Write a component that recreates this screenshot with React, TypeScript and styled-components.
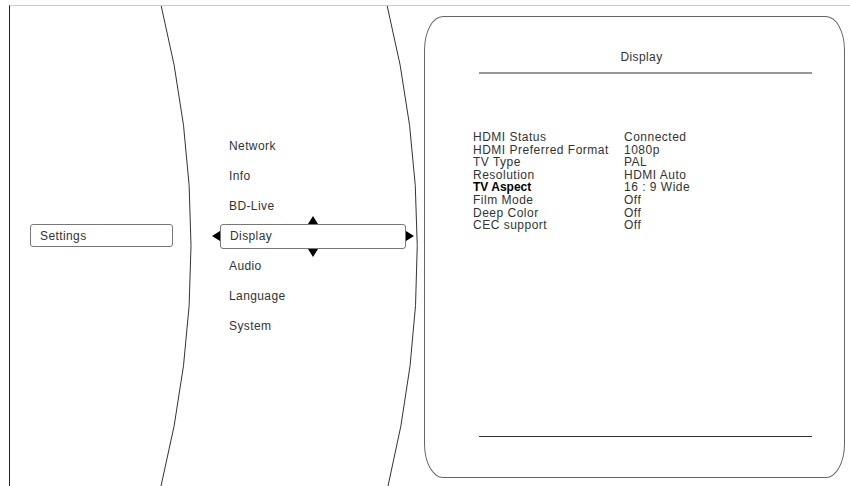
import React from 'react';
import styled, { createGlobalStyle } from 'styled-components';

const GlobalStyle = createGlobalStyle`
  html, body {
    margin: 0;
    padding: 0;
    background: #fff;
  }
  body {
    font-family: "Liberation Sans", Arial, sans-serif;
    color: #333;
  }
`;

const Stage = styled.div`
  position: relative;
  width: 850px;
  height: 486px;
  overflow: hidden;
  background: #fff;
`;

// the two curved dividers are a drawing behind the menu
const Backdrop = styled.svg`
  position: absolute;
  inset: 0;
  pointer-events: none;
`;

const Frame = styled.div`
  position: relative;
  display: flex;
  margin: 5px 0 0 9px;
  width: 841px;
  height: 481px;
  box-sizing: border-box;
  border-top: 1px solid #ccc;
  border-left: 1px solid #222;
`;

const LeftCol = styled.div`
  width: 210px;
  padding: 218px 0 0 20px;
  box-sizing: border-box;
`;

const MenuCol = styled.div`
  width: 204px;
  padding-top: 125px;
  box-sizing: border-box;
  display: flex;
  flex-direction: column;
`;

const Box = styled.div<{ $w: number; $h: number }>`
  position: relative;
  width: ${(p) => p.$w}px;
  height: ${(p) => p.$h}px;
  box-sizing: border-box;
  border: 1px solid #777;
  border-radius: 3px;
  padding-left: 9px;
  display: flex;
  align-items: center;
  font-size: 12px;
  letter-spacing: 0.4px;
  color: #333;
`;

const MenuItem = styled.div`
  height: 30px;
  display: flex;
  align-items: center;
  padding-left: 9px;
  font-size: 12px;
  letter-spacing: 0.4px;
  color: #333;
`;

const MenuSlot = styled.div`
  height: 30px;
  display: flex;
  align-items: center;
`;

const Arrow = styled.span<{ $dir: 'left' | 'right' | 'up' | 'down' }>`
  position: absolute;
  width: 0;
  height: 0;
  ${(p) =>
    p.$dir === 'left'
      ? `left: -9px; top: 50%; margin-top: -5px;
         border-top: 5px solid transparent; border-bottom: 5px solid transparent;
         border-right: 8px solid #000;`
      : p.$dir === 'right'
      ? `right: -9px; top: 50%; margin-top: -5px;
         border-top: 5px solid transparent; border-bottom: 5px solid transparent;
         border-left: 8px solid #000;`
      : p.$dir === 'up'
      ? `top: -9px; left: 50%; margin-left: -5px;
         border-left: 5px solid transparent; border-right: 5px solid transparent;
         border-bottom: 8px solid #000;`
      : `bottom: -9px; left: 50%; margin-left: -5px;
         border-left: 5px solid transparent; border-right: 5px solid transparent;
         border-top: 8px solid #000;`}
`;

const Panel = styled.div`
  margin-top: 10px;
  width: 421px;
  height: 462px;
  box-sizing: border-box;
  border: 1px solid #666;
  border-radius: 19px / 34px;
  background: #fff;
  display: flex;
  flex-direction: column;
  padding: 32px 0 40px 48px;
`;

const Title = styled.div`
  width: 325px;
  margin-left: 6px;
  text-align: center;
  font-size: 12px;
  letter-spacing: 0.4px;
  line-height: 16px;
  color: #333;
`;

const Rule = styled.div<{ $thick?: boolean }>`
  width: 333px;
  margin-left: 6px;
  height: ${(p) => (p.$thick ? 2 : 1)}px;
  background: ${(p) => (p.$thick ? '#999' : '#333')};
`;

const TopRule = styled(Rule)`
  margin-top: 7px;
`;

const Table = styled.div`
  margin-top: 57px;
  display: grid;
  grid-template-columns: 151px auto;
  font-size: 12px;
  letter-spacing: 0.5px;
  line-height: 12.6px;
  color: #333;
  flex: 1;
  align-content: start;
`;

const Cell = styled.div<{ $bold?: boolean }>`
  white-space: nowrap;
  font-weight: ${(p) => (p.$bold ? 700 : 400)};
  letter-spacing: ${(p) => (p.$bold ? '0' : '0.5px')};
  color: ${(p) => (p.$bold ? '#000' : '#333')};
`;

const menu = ['Network', 'Info', 'BD-Live', 'Display', 'Audio', 'Language', 'System'];

const rows: [string, string, boolean?][] = [
  ['HDMI Status', 'Connected'],
  ['HDMI Preferred Format', '1080p'],
  ['TV Type', 'PAL'],
  ['Resolution', 'HDMI Auto'],
  ['TV Aspect', '16 : 9 Wide', true],
  ['Film Mode', 'Off'],
  ['Deep Color', 'Off'],
  ['CEC support', 'Off'],
];

export default function App() {
  return (
    <Stage>
      <GlobalStyle />
      <Backdrop width="850" height="486" viewBox="0 0 850 486">
        <path d="M161 5 Q221 245.5 161 486" fill="none" stroke="#333" strokeWidth="1" />
        <path d="M387 5 Q447 245.5 388 486" fill="none" stroke="#333" strokeWidth="1" />
      </Backdrop>
      <Frame>
        <LeftCol>
          <Box $w={143} $h={23}>Settings</Box>
        </LeftCol>
        <MenuCol>
          {menu.map((m) =>
            m === 'Display' ? (
              <MenuSlot key={m}>
                <Box $w={186} $h={25}>
                  <Arrow $dir="left" />
                  <Arrow $dir="up" />
                  {m}
                  <Arrow $dir="down" />
                  <Arrow $dir="right" />
                </Box>
              </MenuSlot>
            ) : (
              <MenuItem key={m}>{m}</MenuItem>
            )
          )}
        </MenuCol>
        <Panel>
          <Title>Display</Title>
          <TopRule $thick />
          <Table>
            {rows.map(([label, value, bold]) => (
              <React.Fragment key={label}>
                <Cell $bold={bold}>{label}</Cell>
                <Cell>{value}</Cell>
              </React.Fragment>
            ))}
          </Table>
          <Rule />
        </Panel>
      </Frame>
    </Stage>
  );
}
